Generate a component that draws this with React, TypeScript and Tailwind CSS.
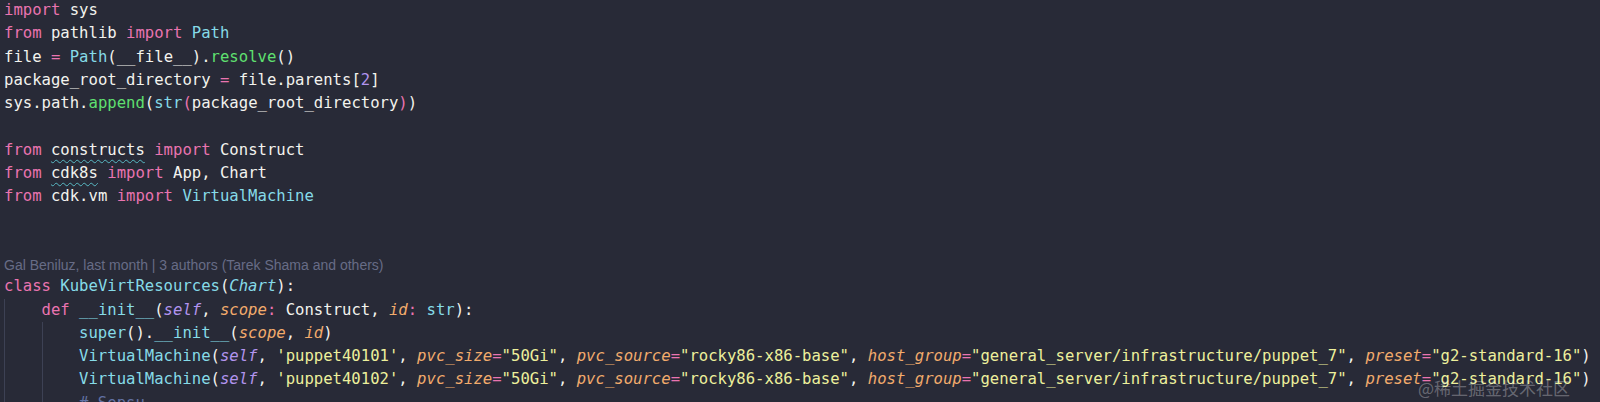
import React from 'react'

type Tok = [string, string?]

const styles: Record<string, string> = {
  k: 'text-[#ea74b0]',
  c: 'text-[#86dbe8]',
  ci: 'text-[#86dbe8] italic',
  g: 'text-[#5fe070]',
  p: 'text-[#b294ee]',
  pi: 'text-[#b294ee] italic',
  oi: 'text-[#f2ab6c] italic',
  y: 'text-[#edf09c]',
  cm: 'text-[#6272a4]',
  u: 'underline decoration-wavy decoration-[#58b9c4] underline-offset-[4px] decoration-1',
}

const vm = (id: string): Tok[] => [
  ['VirtualMachine', 'c'],
  ['('],
  ['self', 'pi'],
  [', '],
  [`'${id}'`, 'y'],
  [', '],
  ['pvc_size', 'oi'],
  ['=', 'k'],
  ['"50Gi"', 'y'],
  [', '],
  ['pvc_source', 'oi'],
  ['=', 'k'],
  ['"rocky86-x86-base"', 'y'],
  [', '],
  ['host_group', 'oi'],
  ['=', 'k'],
  ['"general_server/infrastructure/puppet_7"', 'y'],
  [', '],
  ['preset', 'oi'],
  ['=', 'k'],
  ['"g2-standard-16"', 'y'],
  [')'],
]

const top: Tok[][] = [
  [['import', 'k'], [' sys']],
  [['from', 'k'], [' pathlib '], ['import', 'k'], [' '], ['Path', 'c']],
  [['file '], ['=', 'k'], [' '], ['Path', 'c'], ['(__file__).'], ['resolve', 'g'], ['()']],
  [['package_root_directory '], ['=', 'k'], [' file.parents['], ['2', 'p'], [']']],
  [['sys.path.'], ['append', 'g'], ['('], ['str', 'c'], ['(', 'k'], ['package_root_directory'], [')', 'k'], [')']],
  [],
  [['from', 'k'], [' '], ['constructs', 'u'], [' '], ['import', 'k'], [' Construct']],
  [['from', 'k'], [' '], ['cdk8s', 'u'], [' '], ['import', 'k'], [' App, Chart']],
  [['from', 'k'], [' cdk.vm '], ['import', 'k'], [' '], ['VirtualMachine', 'c']],
  [],
  [],
]

const body: { indent: number; toks: Tok[] }[] = [
  { indent: 0, toks: [['class', 'k'], [' '], ['KubeVirtResources', 'c'], ['('], ['Chart', 'ci'], ['):']] },
  {
    indent: 1,
    toks: [
      ['def', 'k'], [' '], ['__init__', 'c'], ['('], ['self', 'pi'], [', '], ['scope', 'oi'], [':', 'k'],
      [' Construct, '], ['id', 'oi'], [':', 'k'], [' '], ['str', 'c'], ['):'],
    ],
  },
  { indent: 2, toks: [['super', 'c'], ['().'], ['__init__', 'c'], ['('], ['scope', 'oi'], [', '], ['id', 'oi'], [')']] },
  { indent: 2, toks: vm('puppet40101') },
  { indent: 2, toks: vm('puppet40102') },
  { indent: 2, toks: [['# Sepsu', 'cm']] },
]

function Line({ toks, indent = 0 }: { toks: Tok[]; indent?: number }) {
  return (
    <div className="flex h-[23.3px] leading-[23.3px] whitespace-pre">
      {Array.from({ length: indent }).map((_, i) => (
        <span key={i} className="w-[4ch] shrink-0 border-l border-[#3d4154]" />
      ))}
      <span>
        {toks.map(([t, s], i) => (
          <span key={i} className={s ? styles[s] : undefined}>
            {t}
          </span>
        ))}
        {toks.length === 0 ? ' ' : null}
      </span>
    </div>
  )
}

export default function App() {
  return (
    <div className="relative h-[402px] w-full overflow-hidden bg-[#282a37]">
      <div className="mt-[-1px] pl-1 font-['DejaVu_Sans_Mono',monospace] text-[15.6px] text-[#f3f3ee]">
        {top.map((toks, i) => (
          <Line key={i} toks={toks} />
        ))}
        <div className="h-[20px] font-['Liberation_Sans',Arial,sans-serif] text-[14px] leading-[20px] text-[#676c86]">
          Gal Beniluz, last month | 3 authors (Tarek Shama and others)
        </div>
        {body.map((l, i) => (
          <Line key={i} toks={l.toks} indent={l.indent} />
        ))}
      </div>
      <div className="absolute bottom-[6px] right-[30px] font-['Noto_Sans_CJK_SC',sans-serif] text-[17px] leading-none text-white/30">
        @稀土掘金技术社区
      </div>
    </div>
  )
}
